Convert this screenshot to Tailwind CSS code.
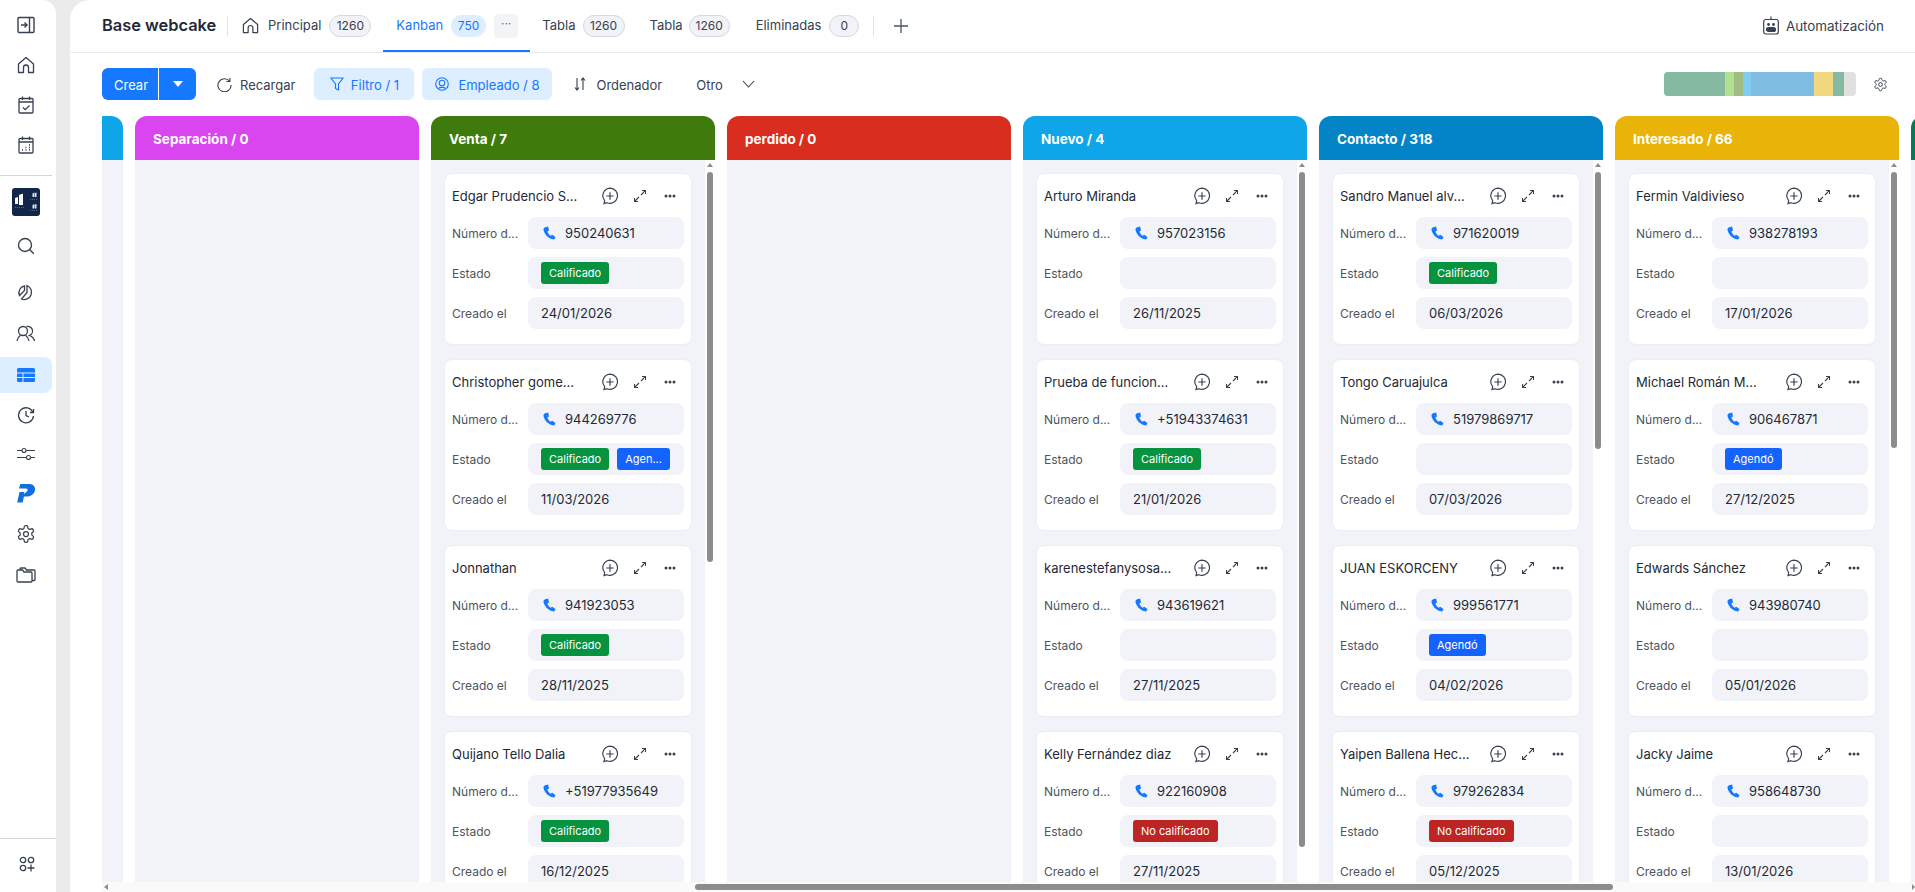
<!DOCTYPE html>
<html lang="es">
<head>
  <meta charset="UTF-8">
  <title>Base webcake</title>
  <script src="https://cdn.jsdelivr.net/npm/@tailwindcss/browser@4"></script>
</head>
<body class="bg-[#ebebeb] text-[#1f2937] font-['Inter',sans-serif] h-screen w-screen overflow-hidden flex">

  <!-- Sidebar -->
  <aside class="w-[56px] shrink-0 h-full bg-white rounded-tr-[14px] flex flex-col text-[#374151]">
    <div class="flex flex-col items-center gap-[22px] pt-[16px] pr-[4px] h-[175px]">
      <svg class="w-[18px] h-[18px]" viewBox="0 0 18 18" fill="none" stroke="currentColor" stroke-width="1.4"><rect x="1" y="1.500" width="16" height="15" rx="1"/><path d="M12.500 1.500v15M4 9h5.500M7.500 6.500 10 9l-2.500 2.500"/></svg>
      <svg class="w-[18px] h-[18px]" viewBox="0 0 18 18" fill="none" stroke="currentColor" stroke-width="1.3"><path d="M1.500 8 9 1.500 16.500 8v8.500h-5v-5a2.500 2.500 0 0 0-5 0v5h-5z" stroke-linejoin="round"/></svg>
      <svg class="w-[18px] h-[18px]" viewBox="0 0 18 18" fill="none" stroke="currentColor" stroke-width="1.3"><rect x="2" y="2.500" width="14" height="14.500" rx="1"/><path d="M2 6h14M5.500 .5v3.500M12.500 .5v3.500M6 11.500l2.200 2.200L12.500 9.500"/></svg>
      <svg class="w-[18px] h-[18px]" viewBox="0 0 18 18" fill="none" stroke="currentColor" stroke-width="1.3"><rect x="2" y="2.500" width="14" height="14.500" rx="1"/><path d="M2 6h14M5.500 .5v3.500M12.500 .5v3.500M5 14h1M8.500 14h1M12 14h1M8.500 11.500h1M12 11.500h1M12 9h1"/></svg>
    </div>
    <div class="h-px bg-[#d4d4dc] mr-[4px]"></div>
    <div class="flex flex-col items-center pt-[12px] pr-[4px]">
      <svg class="w-[28px] h-[28px]" viewBox="0 0 28 28"><rect width="28" height="28" rx="3" fill="#12264a"/><path d="M3 10l3-1v7H3zM7 7l4-1.500V17H7z" fill="#fff"/><path d="M20.500 5.500l2-1V9h-2zM23 5l1.500-.5V9H23zM20.500 17l2-1v4.500h-2zM23 16.500l1.500-.5v4.500H23z" fill="#dfe6f0"/><path d="M3 19.500h10M18 11.500h7M18 22.500h7" stroke="#7f8fa8" stroke-width=".6" stroke-dasharray="1 1"/></svg>
      <svg class="w-[18px] h-[18px] mt-[21px]" viewBox="0 0 18 18" fill="none" stroke="currentColor" stroke-width="1.4"><circle cx="8" cy="8" r="6.500"/><path d="m12.800 12.800 4 4"/></svg>
      <svg class="w-[18px] h-[18px] mt-[29px]" viewBox="0 0 18 18" fill="none" stroke="currentColor" stroke-width="1.3"><path d="M10 1.500A7 7 0 1 1 4.500 15L10 8.500z"/><path d="M7.500 1.800A7 7 0 0 0 2.500 11.500l5-5z"/></svg>
      <svg class="w-[20px] h-[18px] mt-[23px]" viewBox="0 0 20 18" fill="none" stroke="currentColor" stroke-width="1.3"><circle cx="7" cy="6" r="4.500"/><path d="M1 16c.5-3.500 2.500-5 3.500-5.700M13 16c-.5-3.500-2.500-5-3.500-5.700M10.500 1.700a4.500 4.500 0 0 1 3 8.600c1.500.7 4.500 2.200 5 5.700"/></svg>
    </div>
    <div class="mt-[14px] mr-[4px] h-[36px] w-[52px] rounded-r-[8px] bg-[#dceeff] flex items-center justify-center">
      <svg class="w-[18px] h-[14px]" viewBox="0 0 18 14"><rect width="18" height="14" rx="1.500" fill="#1677ff"/><path d="M0 5h18M0 9.500h18M6 5v9" stroke="#dceeff" stroke-width="1"/></svg>
    </div>
    <div class="flex flex-col items-center pr-[4px] text-[#374151]">
      <svg class="w-[18px] h-[18px] mt-[13px]" viewBox="0 0 18 18" fill="none" stroke="currentColor" stroke-width="1.300"><path d="M16 6.500A7.500 7.500 0 1 0 16.500 10"/><path d="M13 6.500h3.500V3M9 5v4.500l3 1.500"/></svg>
      <svg class="w-[18px] h-[14px] mt-[23px]" viewBox="0 0 18 14" fill="none" stroke="currentColor" stroke-width="1.100"><path d="M0 3.500h5M9 3.500h9M0 10.500h9.500M13.500 10.500H18"/><circle cx="7" cy="3.500" r="2"/><circle cx="11.500" cy="10.500" r="2"/></svg>
      <svg class="w-[20px] h-[20px] mt-[22px]" viewBox="0 0 20 20"><path d="M4.300 1h8.700c4.200 0 6.700 2.700 5.900 6.500-.8 3.600-3.800 6-8 6H8L6.600 19.500H1.200L3.500 9h5l-.6 2.300 3-2.800c1.400-1.200.8-2.900-1.200-2.900H3z" fill="#0f6fde"/></svg>
      <svg class="w-[20px] h-[20px] mt-[21px]" viewBox="0 0 24 24" fill="none" stroke="currentColor" stroke-width="1.500"><path d="M12.220 2h-.44a2 2 0 0 0-2 2v.18a2 2 0 0 1-1 1.730l-.43.250a2 2 0 0 1-2 0l-.15-.08a2 2 0 0 0-2.730.730l-.22.380a2 2 0 0 0 .730 2.730l.15.100a2 2 0 0 1 1 1.720v.510a2 2 0 0 1-1 1.740l-.15.090a2 2 0 0 0-.730 2.730l.22.380a2 2 0 0 0 2.730.730l.15-.08a2 2 0 0 1 2 0l.43.250a2 2 0 0 1 1 1.730V20a2 2 0 0 0 2 2h.44a2 2 0 0 0 2-2v-.18a2 2 0 0 1 1-1.730l.43-.25a2 2 0 0 1 2 0l.15.08a2 2 0 0 0 2.730-.73l.22-.39a2 2 0 0 0-.73-2.730l-.15-.08a2 2 0 0 1-1-1.740v-.5a2 2 0 0 1 1-1.740l.15-.09a2 2 0 0 0 .73-2.730l-.22-.38a2 2 0 0 0-2.730-.73l-.15.08a2 2 0 0 1-2 0l-.43-.25a2 2 0 0 1-1-1.730V4a2 2 0 0 0-2-2z"/><circle cx="12" cy="12" r="3"/></svg>
      <svg class="w-[20px] h-[16px] mt-[23px]" viewBox="0 0 20 16" fill="none" stroke="currentColor" stroke-width="1.300"><path d="M1 5.500V14a1 1 0 0 0 1 1h13a1 1 0 0 0 1-1V6a1 1 0 0 0-1-1H8L6.500 3H2a1 1 0 0 0-1 1zM4 3V2a1 1 0 0 1 1-1h4l1.500 2H18a1 1 0 0 1 1 1v8.500a1 1 0 0 1-1 1h-2"/></svg>
    </div>
    <div class="mt-auto">
      <div class="h-px bg-[#d4d4dc]"></div>
      <div class="h-[53px] flex items-center justify-center pr-[2px] pb-[3px]">
        <svg class="w-[16px] h-[16px]" viewBox="0 0 16 16" fill="none" stroke="currentColor" stroke-width="1.300"><circle cx="4" cy="4" r="2.700"/><circle cx="12" cy="4" r="2.700"/><circle cx="4" cy="12" r="2.700"/><path d="M12 8.500v7M8.500 12h7"/></svg>
      </div>
    </div>
  </aside>

  <div class="w-[14px] shrink-0"></div>

  <!-- Contenido -->
  <main class="flex-1 min-w-0 h-full bg-white rounded-tl-[20px] flex flex-col overflow-hidden">
    <header class="h-[53px] shrink-0 border-b border-[#e8eaee] flex items-center pl-[32px] pr-[31px] text-[13px] text-[#374151]">
      <span class="text-[16.4px] font-semibold text-[#1f2937] w-[125px] pb-[2px]">Base webcake</span>
      <span class="w-px h-[20px] bg-[#e0e3e8]"></span>
      <svg class="ml-[14px] mb-[2px] w-[17px] h-[17px]" viewBox="0 0 18 18" fill="none" stroke="currentColor" stroke-width="1.300"><path d="M1.500 8 9 1.500 16.500 8v8.500h-5v-5a2.500 2.500 0 0 0-5 0v5h-5z" stroke-linejoin="round"/></svg>
      <span class="ml-[9px]">Principal</span>
      <span class="ml-[8px] w-[42px] h-[22px] rounded-full bg-[#f1f3f8] border border-[#d5d9e0] flex items-center justify-center text-[12px]">1260</span>
      <div class="ml-[12px] w-[147px] h-[52px] relative flex items-center pl-[13px] text-[#1677ff]">
        <span>Kanban</span>
        <span class="ml-[8px] w-[35px] h-[22px] rounded-full bg-[#dceeff] flex items-center justify-center text-[12px]">750</span>
        <span class="ml-[8px] w-[24px] h-[24px] rounded-[4px] bg-[#f3f4f6] flex items-center justify-center text-[#6b7280] text-[12px] pb-[4px]">···</span>
        <span class="absolute left-0 right-0 bottom-0 h-[2px] bg-[#1677ff]"></span>
      </div>
      <span class="ml-[12px]">Tabla</span>
      <span class="ml-[7px] w-[42px] h-[22px] rounded-full bg-[#f1f3f8] border border-[#d5d9e0] flex items-center justify-center text-[12px]">1260</span>
      <span class="ml-[25px]">Tabla</span>
      <span class="ml-[6px] w-[41px] h-[22px] rounded-full bg-[#f1f3f8] border border-[#d5d9e0] flex items-center justify-center text-[12px]">1260</span>
      <span class="ml-[26px]">Eliminadas</span>
      <span class="ml-[8px] w-[30px] h-[22px] rounded-full bg-[#f1f3f8] border border-[#d5d9e0] flex items-center justify-center text-[12px]">0</span>
      <span class="ml-[14px] w-px h-[20px] bg-[#e0e3e8]"></span>
      <svg class="ml-[19px] w-[16px] h-[16px] text-[#4b5563]" viewBox="0 0 16 16" fill="none" stroke="currentColor" stroke-width="1.300"><path d="M8 1v14M1 8h14"/></svg>
      <div class="ml-auto flex items-center gap-[7px]">
        <svg class="w-[16px] h-[19px]" viewBox="0 0 16 19" fill="none" stroke="currentColor" stroke-width="1.200"><rect x=".7" y="3.500" width="14.600" height="14.500" rx="2"/><path d="M8 3.500V.5"/><rect x="3.500" y="11.500" width="9" height="4" rx="2" fill="currentColor"/><circle cx="5.500" cy="8.500" r=".8" fill="currentColor"/><circle cx="10.500" cy="8.500" r=".8" fill="currentColor"/></svg>
        <span class="text-[13.4px]">Automatización</span>
      </div>
    </header>

    <div class="h-[63px] shrink-0 flex items-center pl-[32px] pr-[27px] pb-[1px] text-[13px] text-[#374151]">
      <div class="w-[94px] h-[32px] rounded-[6px] bg-[#1677ff] text-white flex">
        <span class="w-[57px] flex items-center justify-center border-r border-white pt-[3px] pl-[2px]">Crear</span>
        <span class="flex-1 flex items-center justify-center"><svg class="w-[10px] h-[6px]" viewBox="0 0 10 6" fill="#fff"><path d="M0 0h10L5 6z"/></svg></span>
      </div>
      <svg class="ml-[21px] w-[15px] h-[15px]" viewBox="0 0 16 16" fill="none" stroke="currentColor" stroke-width="1.200"><path d="M13.500 4.500A7 7 0 1 0 15 8.500"/><path d="M13.800 1v3.800H10"/></svg>
      <span class="ml-[8px] pt-[3px]">Recargar</span>
      <div class="ml-[19px] w-[100px] h-[32px] rounded-[6px] bg-[#dceeff] text-[#1677ff] flex items-center justify-center gap-[7px]">
        <svg class="w-[14px] h-[14px]" viewBox="0 0 14 14" fill="none" stroke="currentColor" stroke-width="1.100"><path d="M.8 1h12.400L8.500 6.800V13L5.500 11.500V6.800z" stroke-linejoin="round"/></svg>
        <span class="pt-[3px]">Filtro / 1</span>
      </div>
      <div class="ml-[8px] w-[130px] h-[32px] rounded-[6px] bg-[#dceeff] text-[#1677ff] flex items-center justify-center gap-[9px]">
        <svg class="w-[14px] h-[14px]" viewBox="0 0 14 14" fill="none" stroke="currentColor" stroke-width="1.100"><circle cx="7" cy="7" r="6.300"/><circle cx="7" cy="6" r="2.800"/><path d="M3.500 11.500c1-1.500 6-1.500 7 0"/></svg>
        <span class="pt-[3px]">Empleado / 8</span>
      </div>
      <svg class="ml-[22px] w-[12px] h-[14px]" viewBox="0 0 12 14" fill="none" stroke="currentColor" stroke-width="1.100"><path d="M3 1v12M1 10.500 3 13l2-2.500M9 13V1M7 3.500 9 1l2 2.500"/></svg>
      <span class="ml-[10px] pt-[3px]">Ordenador</span>
      <span class="ml-[34px] pt-[3px]">Otro</span>
      <svg class="ml-[19px] w-[13px] h-[8px]" viewBox="0 0 13 8" fill="none" stroke="currentColor" stroke-width="1.100"><path d="m1 1 5.500 6L12 1"/></svg>
      <div class="ml-auto w-[192px] h-[24px] rounded-[4px] overflow-hidden flex">
        <span class="w-[61px] bg-[#85b9a2]"></span>
        <span class="w-[9px] bg-[#b1e08e]"></span>
        <span class="w-[9px] bg-[#9fbc83]"></span>
        <span class="w-[8px] bg-[#80ccf0]"></span>
        <span class="w-[63px] bg-[#80bde3]"></span>
        <span class="w-[19px] bg-[#f3d882]"></span>
        <span class="w-[11px] bg-[#85b9a2]"></span>
        <span class="w-[12px] bg-[#e0e0e0]"></span>
      </div>
      <svg class="ml-[17px] w-[15px] h-[15px]" viewBox="0 0 24 24" fill="none" stroke="currentColor" stroke-width="1.600"><path d="M12.220 2h-.44a2 2 0 0 0-2 2v.18a2 2 0 0 1-1 1.730l-.43.250a2 2 0 0 1-2 0l-.15-.08a2 2 0 0 0-2.730.730l-.22.380a2 2 0 0 0 .730 2.730l.15.100a2 2 0 0 1 1 1.720v.510a2 2 0 0 1-1 1.740l-.15.090a2 2 0 0 0-.730 2.730l.22.380a2 2 0 0 0 2.730.730l.15-.08a2 2 0 0 1 2 0l.43.250a2 2 0 0 1 1 1.730V20a2 2 0 0 0 2 2h.44a2 2 0 0 0 2-2v-.18a2 2 0 0 1 1-1.730l.43-.25a2 2 0 0 1 2 0l.15.08a2 2 0 0 0 2.730-.73l.22-.39a2 2 0 0 0-.73-2.730l-.15-.08a2 2 0 0 1-1-1.740v-.5a2 2 0 0 1 1-1.740l.15-.09a2 2 0 0 0 .73-2.730l-.22-.38a2 2 0 0 0-2.730-.73l-.15.08a2 2 0 0 1-2 0l-.43-.25a2 2 0 0 1-1-1.730V4a2 2 0 0 0-2-2z"/><circle cx="12" cy="12" r="3"/></svg>
    </div>

    <!-- Tablero -->
    <div id="board" class="flex-1 min-h-0 ml-[32px] flex gap-[12px] overflow-hidden"></div>

    <!-- Barra horizontal -->
    <div class="h-[10px] shrink-0 ml-[32px] bg-[#fafafa] flex items-center">
      <svg class="ml-[2px] w-[4px] h-[6px]" viewBox="0 0 4 6" fill="#8c8c8c"><path d="M4 0v6L0 3z"/></svg>
      <span class="ml-[587px] w-[918px] h-[6px] rounded-full bg-[#8c8c8c]"></span>
      <svg class="ml-auto w-[3px] h-[6px]" viewBox="0 0 3 6" fill="#8c8c8c"><path d="M0 0v6l3-3z"/></svg>
    </div>
  </main>

  <script>
    const tagClass = {
      'Calificado': 'bg-[#05933f]',
      'Agen...': 'bg-[#1463ff]',
      'Agendó': 'bg-[#1463ff]',
      'No calificado': 'bg-[#bd2424]'
    };

    const columns = [
      { stub: true, head: 'bg-[#0ea5e9]' },
      { title: 'Separación / 0', head: 'bg-[#d946ef]', cards: [] },
      {
        title: 'Venta / 7', head: 'bg-[#3f7a0c]', thumb: 'h-[390px]',
        cards: [
          ['Edgar Prudencio S...', '950240631', ['Calificado'], '24/01/2026'],
          ['Christopher gome...', '944269776', ['Calificado', 'Agen...'], '11/03/2026'],
          ['Jonnathan', '941923053', ['Calificado'], '28/11/2025'],
          ['Quijano Tello Dalia', '+51977935649', ['Calificado'], '16/12/2025']
        ]
      },
      { title: 'perdido / 0', head: 'bg-[#d92d1f]', cards: [] },
      {
        title: 'Nuevo / 4', head: 'bg-[#0ea5e9]', thumb: 'h-[675px]',
        cards: [
          ['Arturo Miranda', '957023156', [], '26/11/2025'],
          ['Prueba de funcion...', '+51943374631', ['Calificado'], '21/01/2026'],
          ['karenestefanysosa...', '943619621', [], '27/11/2025'],
          ['Kelly Fernández diaz', '922160908', ['No calificado'], '27/11/2025']
        ]
      },
      {
        title: 'Contacto / 318', head: 'bg-[#0284c7]', thumb: 'h-[277px]',
        cards: [
          ['Sandro Manuel alv...', '971620019', ['Calificado'], '06/03/2026'],
          ['Tongo Caruajulca', '51979869717', [], '07/03/2026'],
          ['JUAN ESKORCENY', '999561771', ['Agendó'], '04/02/2026'],
          ['Yaipen Ballena Hec...', '979262834', ['No calificado'], '05/12/2025']
        ]
      },
      {
        title: 'Interesado / 66', head: 'bg-[#eab308]', thumb: 'h-[276px]',
        cards: [
          ['Fermin Valdivieso', '938278193', [], '17/01/2026'],
          ['Michael Román M...', '906467871', ['Agendó'], '27/12/2025'],
          ['Edwards Sánchez', '943980740', [], '05/01/2026'],
          ['Jacky Jaime', '958648730', [], '13/01/2026']
        ]
      },
      { title: '', head: 'bg-[#047857]', cards: [] }
    ];

    function renderCard(card) {
      const [name, phone, tags, date] = card;
      const tagHtml = tags.map(t =>
        `<span class="h-[22px] px-[8px] rounded-[3px] text-white text-[11px] flex items-center ${tagClass[t]}">${t}</span>`
      ).join('');
      return `
        <div class="shrink-0 w-[248px] h-[172px] bg-white rounded-[8px] border border-[#eceef2] px-[7px]">
          <div class="h-[43px] flex items-center text-[13px]">
            <span class="w-[149px] truncate pt-[2px]">${name}</span>
            <svg class="w-[18px] h-[18px] text-[#374151]" viewBox="0 0 17 17" fill="none" stroke="currentColor" stroke-width="1.100"><path d="M8.500 1a7.200 7.200 0 1 1-3 13.800l-2.700.9.700-2.800A7.200 7.200 0 0 1 8.500 1zM8.500 5v7M5 8.500h7"/></svg>
            <svg class="ml-[15px] w-[12px] h-[12px] text-[#374151]" viewBox="0 0 12 12" fill="none" stroke="currentColor" stroke-width="1.100"><path d="M7 5l4.500-4.500M8 .5h3.500V4M5 7 .5 11.500M.5 8v3.500H4"/></svg>
            <svg class="ml-[18px] w-[12px] h-[4px] text-[#374151]" viewBox="0 0 12 4" fill="currentColor"><circle cx="2" cy="2" r="1.500"/><circle cx="6" cy="2" r="1.500"/><circle cx="10" cy="2" r="1.500"/></svg>
          </div>
          <div class="flex flex-col gap-[8px]">
            <div class="flex items-center">
              <span class="w-[76px] pt-[2px] text-[12px] text-[#4b5563]">Número d...</span>
              <div class="w-[156px] h-[32px] rounded-[8px] bg-[#f1f3f8] flex items-center pl-[14px] text-[13px]">
                <svg class="w-[14px] h-[14px]" viewBox="0 0 24 24" fill="#1677ff"><path d="M7 1.500 10.500 1l1.500 6.500-2.800 2c1 3.200 2.500 5.200 5.300 7l3-1.700L23 19l-.9 2.300c-.6 1.300-2 2-3.600 1.500C9.500 20.500 3.300 13 2.500 6c-.2-2.200 2-4 4.500-4.500z"/></svg>
                <span class="ml-[9px] pt-[2px]">${phone}</span>
              </div>
            </div>
            <div class="flex items-center">
              <span class="w-[76px] pt-[2px] text-[12px] text-[#4b5563]">Estado</span>
              <div class="w-[156px] h-[32px] rounded-[8px] bg-[#f1f3f8] flex items-center pl-[13px] gap-[8px]">${tagHtml}</div>
            </div>
            <div class="flex items-center">
              <span class="w-[76px] pt-[2px] text-[12px] text-[#4b5563]">Creado el</span>
              <div class="w-[156px] h-[32px] rounded-[8px] bg-[#f1f3f8] flex items-center pl-[13px] pt-[2px] text-[13px]">${date}</div>
            </div>
          </div>
        </div>`;
    }

    function renderColumn(col) {
      if (col.stub) {
        return `<section class="shrink-0 w-[21px] flex flex-col">
          <div class="h-[44px] rounded-tr-[12px] ${col.head}"></div>
          <div class="flex-1 bg-[#f1f3f8]"></div>
        </section>`;
      }
      const scrollbar = col.thumb ? `
        <div class="w-[10px] shrink-0 flex flex-col items-center pt-[3px]">
          <svg class="w-[6px] h-[4px]" viewBox="0 0 6 4" fill="#8c8c8c"><path d="M3 0l3 4H0z"/></svg>
          <span class="mt-[5px] w-[6px] rounded-full bg-[#8c8c8c] ${col.thumb}"></span>
        </div>` : '';
      return `<section class="shrink-0 w-[284px] flex flex-col">
        <div class="h-[44px] shrink-0 rounded-t-[12px] pl-[18px] pt-[2px] flex items-center text-white text-[13.5px] font-bold ${col.head}">${col.title}</div>
        <div class="flex-1 min-h-0 flex">
          <div class="flex-1 min-w-0 bg-[#f1f3f8] overflow-hidden pl-[13px] pt-[13px] flex flex-col gap-[14px]">
            ${col.cards.map(renderCard).join('')}
          </div>
          ${scrollbar}
        </div>
      </section>`;
    }

    document.getElementById('board').innerHTML = columns.map(renderColumn).join('');
  </script>
</body>
</html>
